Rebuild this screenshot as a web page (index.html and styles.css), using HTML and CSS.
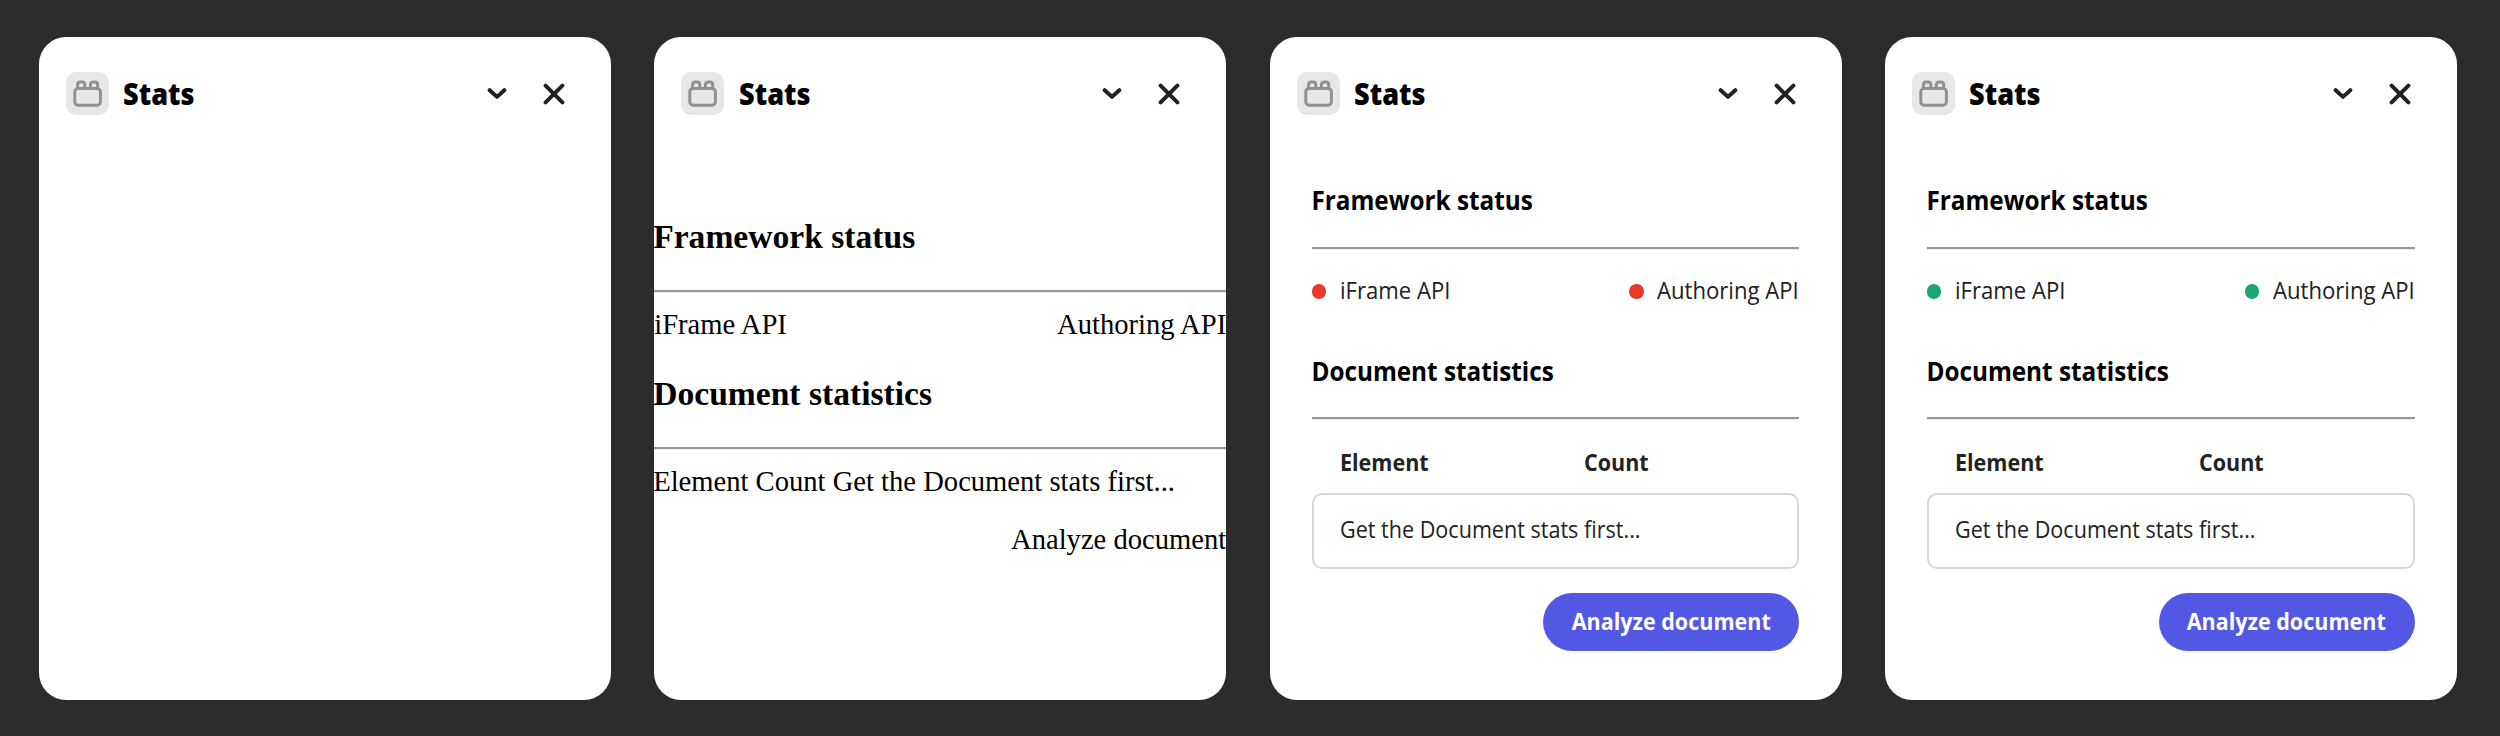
FILE: index.html
```html
<!DOCTYPE html>
<html lang="en">
<head>
<meta charset="utf-8">
<title>Stats</title>
<link rel="stylesheet" href="styles.css">
</head>
<body>
<svg class="sprite" width="0" height="0" aria-hidden="true">
  <symbol id="brick" viewBox="0 0 43 43">
    <g fill="none" stroke="#919191" stroke-width="3" stroke-linejoin="round">
      <rect x="8.8" y="16.6" width="25.6" height="16.6" rx="3.2"/>
      <path d="M11.600 16.600v-4a2.600 2.600 0 0 1 2.600-2.600h2a2.600 2.600 0 0 1 2.600 2.600v4M24.400 16.600v-4a2.600 2.600 0 0 1 2.600-2.600h2a2.600 2.600 0 0 1 2.600 2.600v4"/>
    </g>
  </symbol>
  <symbol id="chevron" viewBox="0 0 20 12">
    <path d="M2.700 2.200 10 8.900l7.300-6.700" fill="none" stroke="#222" stroke-width="4" stroke-linecap="round" stroke-linejoin="round"/>
  </symbol>
  <symbol id="cross" viewBox="0 0 22 22">
    <path d="M2.600 2.600 19.400 19.400M19.400 2.600 2.600 19.400" fill="none" stroke="#222" stroke-width="4" stroke-linecap="round"/>
  </symbol>
</svg>
<main class="board">
  <section class="panel">
    <header class="head">
      <svg class="tile"><use href="#brick"/></svg>
      <h1 class="title">Stats</h1>
      <svg class="chevron"><use href="#chevron"/></svg>
      <svg class="cross"><use href="#cross"/></svg>
    </header>
  </section>

  <section class="panel">
    <header class="head">
      <svg class="tile"><use href="#brick"/></svg>
      <h1 class="title">Stats</h1>
      <svg class="chevron"><use href="#chevron"/></svg>
      <svg class="cross"><use href="#cross"/></svg>
    </header>
    <div class="plain">
      <h2 class="plain-heading">Framework status</h2>
      <div class="rule"></div>
      <div class="plain-row"><span>iFrame API</span><span>Authoring API</span></div>
      <h2 class="plain-heading second">Document statistics</h2>
      <div class="rule"></div>
      <p class="plain-text">Element Count Get the Document stats first...</p>
      <p class="plain-action">Analyze document</p>
    </div>
  </section>

  <section class="panel">
    <header class="head">
      <svg class="tile"><use href="#brick"/></svg>
      <h1 class="title">Stats</h1>
      <svg class="chevron"><use href="#chevron"/></svg>
      <svg class="cross"><use href="#cross"/></svg>
    </header>
    <div class="styled offline">
      <h2 class="heading">Framework status</h2>
      <div class="rule"></div>
      <div class="statuses">
        <div class="status"><i class="dot"></i><span class="label iframe">iFrame API</span></div>
        <div class="status"><i class="dot"></i><span class="label authoring">Authoring API</span></div>
      </div>
      <h2 class="heading second">Document statistics</h2>
      <div class="rule"></div>
      <div class="columns"><span class="column">Element</span><span class="column">Count</span></div>
      <div class="box"><span class="label">Get the Document stats first...</span></div>
      <button class="button"><span class="button-label">Analyze document</span></button>
    </div>
  </section>

  <section class="panel">
    <header class="head">
      <svg class="tile"><use href="#brick"/></svg>
      <h1 class="title">Stats</h1>
      <svg class="chevron"><use href="#chevron"/></svg>
      <svg class="cross"><use href="#cross"/></svg>
    </header>
    <div class="styled online">
      <h2 class="heading">Framework status</h2>
      <div class="rule"></div>
      <div class="statuses">
        <div class="status"><i class="dot"></i><span class="label iframe">iFrame API</span></div>
        <div class="status"><i class="dot"></i><span class="label authoring">Authoring API</span></div>
      </div>
      <h2 class="heading second">Document statistics</h2>
      <div class="rule"></div>
      <div class="columns"><span class="column">Element</span><span class="column">Count</span></div>
      <div class="box"><span class="label">Get the Document stats first...</span></div>
      <button class="button"><span class="button-label">Analyze document</span></button>
    </div>
  </section>
</main>
</body>
</html>
```
FILE: styles.css
```css
* { box-sizing: border-box; }
body { margin: 0; background: #2c2c2c; font-family: "Open Sans", sans-serif; color: #222; }
h1, h2, p { margin: 0; }
.sprite { display: block; }

.board {
  display: flex;
  gap: 43.4px;
  height: 736px;
  padding: 36.5px 0 36px 38.8px;
}
.panel {
  flex: none;
  width: 572px;
  height: 663.5px;
  padding-top: 35.5px;
  border-radius: 27px;
  background: #fff;
  overflow: hidden;
}

.head { display: flex; align-items: center; height: 43px; padding: 0 46px 0 27px; }
.tile { width: 43px; height: 43px; border-radius: 10px; background: #e7e7e7; }
.title {
  margin: 0 auto 0 14.5px;
  font-size: 29.5px;
  font-weight: 800;
  line-height: 43px;
  color: #000;
  transform: scaleX(.92);
  transform-origin: left;
}
.chevron { width: 20px; height: 12px; margin-right: 36px; }
.cross { width: 22px; height: 22px; }

.rule { height: 3px; border-top: 2px solid #979797; border-bottom: 1px solid #ededed; }

/* Unstyled web components */
.plain { padding-top: 102px; font-family: "Liberation Serif", serif; font-size: 28.6px; line-height: 32px; color: #000; white-space: nowrap; }
.plain-heading { margin-bottom: 33px; font-size: 33.6px; line-height: 40px; text-indent: -1px; }
.plain-heading.second { margin-top: 33px; }
.plain-row { display: flex; justify-content: space-between; margin-top: 16px; }
.plain-text { margin-top: 16px; text-indent: -1px; }
.plain-action { margin-top: 26px; text-align: right; }

/* Themed web components */
.styled { display: flex; flex-direction: column; padding: 65px 42.4px 0 42px; font-size: 23.4px; line-height: 32px; white-space: nowrap; }
.heading {
  margin-bottom: 27px;
  font-size: 27px;
  font-weight: 700;
  line-height: 40px;
  color: #000;
  transform: translateX(-.6px) scaleX(.9);
  transform-origin: left;
}
.heading.second { margin-top: 45px; margin-bottom: 26px; }
.statuses { display: flex; justify-content: space-between; margin-top: 24px; }
.status { display: flex; align-items: center; gap: 13.5px; }
.dot { width: 14.5px; height: 14.5px; margin-top: 3px; border-radius: 50%; }
.offline .dot { background: #ea3829; }
.online .dot { background: #1ba570; }
.label { transform: scaleX(.922); transform-origin: left; }
.authoring { width: 142px; transform: scaleX(.945); }
.iframe { transform: scaleX(.945); }
.columns { display: grid; grid-template-columns: 244px 1fr; margin-top: 26px; padding-left: 28px; }
.column { font-weight: 700; transform: scaleX(.92); transform-origin: left; }
.box {
  display: flex;
  align-items: center;
  height: 76px;
  margin-top: 14.5px;
  padding: 0 0 3px 26px;
  border: 2px solid #d7d7d7;
  border-radius: 10px;
}
.button {
  align-self: flex-end;
  display: flex;
  align-items: center;
  justify-content: center;
  width: 256px;
  height: 57.5px;
  margin-top: 24.5px;
  padding: 0 0 1px;
  border: 0;
  border-radius: 29px;
  background: #5258e4;
  color: #fff;
  font: 700 23.4px/32px "Open Sans", sans-serif;
}
.button-label { transform: scaleX(.92); }
```
